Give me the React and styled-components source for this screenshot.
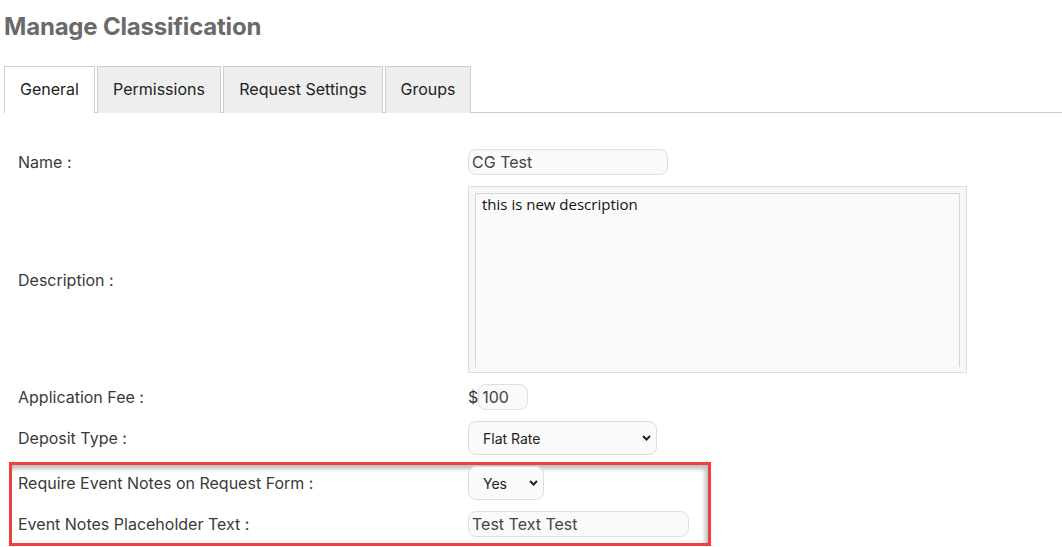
import React from 'react'
import styled, { createGlobalStyle } from 'styled-components'

const GlobalStyle = createGlobalStyle`
  body {
    margin: 0;
    background: #ffffff;
    font-family: Inter, "Liberation Sans", sans-serif;
  }
`

const Page = styled.div`
  padding: 0 0 0 4px;
  width: 1058px;
`

const Title = styled.h1`
  margin: 0;
  padding-top: 12px;
  height: 41px;
  font-size: 24px;
  font-weight: 700;
  color: #6a6a6a;
  letter-spacing: -0.2px;
`

const TabBar = styled.div`
  display: flex;
  gap: 2px;
  margin-top: 13px;
  border-bottom: 1px solid #cccccc;
  height: 46px;
`

const Tab = styled.div`
  display: flex;
  align-items: center;
  justify-content: center;
  padding: 0 15px 2px;
  width: ${p => p.$w}px;
  box-sizing: border-box;
  height: 47px;
  border: 1px solid #cfcfcf;
  border-bottom: none;
  background: ${p => (p.$active ? '#ffffff' : '#eeeeee')};
  font-size: 16px;
  color: #222;
`

const Form = styled.div`
  display: grid;
  grid-template-columns: 450px 1fr;
  row-gap: 11px;
  align-items: center;
  padding: 36px 0 0 14px;
`

const Label = styled.div`
  font-size: 16px;
  color: #3a3a3a;
`

const Highlight = styled.div`
  grid-column: 1 / -1;
  display: grid;
  grid-template-columns: 450px 1fr;
  row-gap: 11px;
  align-items: center;
  width: 702px;
  box-sizing: border-box;
  margin: -4px 0 0 -9px;
  padding: 1px 0 6px 6px;
  border: 3px solid #ee4040;
  box-shadow: inset -3px 4px 4px rgba(0, 0, 0, 0.25);
`

const TextInput = styled.div`
  display: flex;
  align-items: center;
  box-sizing: border-box;
  width: ${p => p.$w}px;
  height: 26px;
  padding: 0 3px;
  border: 1px solid #e0e0e0;
  border-radius: 8px;
  background: #fafafa;
  font-size: 16px;
  color: #444;
`

const Money = styled.div`
  display: flex;
  align-items: center;
  font-size: 16px;
  color: #333;
`

const AreaWrap = styled.div`
  box-sizing: border-box;
  width: 499px;
  height: 187px;
  padding: 6px 6px 0 6px;
  border: 1px solid #dddddd;
  background: #f7f7f7;
`

const Area = styled.div`
  box-sizing: border-box;
  height: 174px;
  padding: 0 6px;
  border: 1px solid #d6d6d6;
  border-bottom: none;
  background: #fafafa;
  font-family: "Open Sans", "Noto Sans", sans-serif;
  font-size: 15px;
  color: #111;
`

const Select = styled.div`
  display: flex;
  align-items: center;
  justify-content: space-between;
  box-sizing: border-box;
  width: ${p => p.$w}px;
  height: 34px;
  padding: 0 5px 0 14px;
  border: 1px solid #dcdcdc;
  border-radius: 8px;
  background: #fafafa;
  font-size: 14px;
  color: #222;
  svg {
    display: block;
  }
`

const Chevron = () => (
  <svg width="9" height="6" viewBox="0 0 9 6">
    <path d="M1 1 L4.5 4.5 L8 1" fill="none" stroke="#222" strokeWidth="2" />
  </svg>
)

export default function App() {
  return (
    <Page>
      <GlobalStyle />
      <Title>Manage Classification</Title>
      <TabBar>
        <Tab $active $w={91}>General</Tab>
        <Tab $w={124}>Permissions</Tab>
        <Tab $w={160}>Request Settings</Tab>
        <Tab $w={86}>Groups</Tab>
      </TabBar>
      <Form>
        <Label>Name :</Label>
        <TextInput $w={200}>CG Test</TextInput>

        <Label>Description :</Label>
        <AreaWrap>
          <Area>this is new description</Area>
        </AreaWrap>

        <Label>Application Fee :</Label>
        <Money>
          $<TextInput $w={50}>100</TextInput>
        </Money>

        <Label>Deposit Type :</Label>
        <Select $w={189}>
          Flat Rate
          <Chevron />
        </Select>

        <Highlight>
          <Label>Require Event Notes on Request Form :</Label>
          <Select $w={76}>
            Yes
            <Chevron />
          </Select>

          <Label>Event Notes Placeholder Text :</Label>
          <TextInput $w={221}>Test Text Test</TextInput>
        </Highlight>
      </Form>
    </Page>
  )
}
